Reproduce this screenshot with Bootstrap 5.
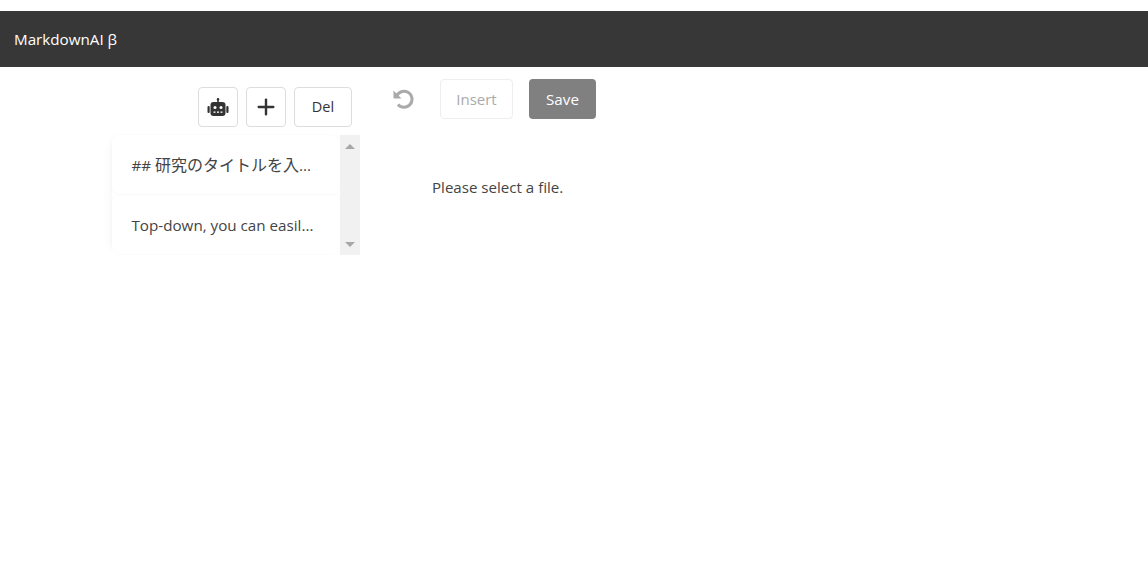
<!DOCTYPE html>
<html lang="en">
<head>
<meta charset="utf-8">
<title>MarkdownAI</title>
<link rel="stylesheet" href="https://cdn.jsdelivr.net/npm/bootstrap@5.3.0/dist/css/bootstrap.min.css">
<style>
html,body{height:100%;overflow:hidden}
body{font-family:"Open Sans","Noto Sans CJK JP",sans-serif;font-size:15px;color:#444;background:#fff;padding-top:11px}
.topbar{height:56px;background:#373737;padding:0 14px}
.topbar .navbar-brand{font-size:15.2px;color:#fff;margin:0;padding:0}
.side-pane{width:360px;padding-top:20px}
.tool-row{padding-right:8px;margin-bottom:8px}
.tool-btn{height:40px;min-width:40px;padding:0;border:1px solid #ddd;border-radius:4px;background:#fff;color:#333;font-size:14.5px;display:flex;align-items:center;justify-content:center}
.del-btn{width:58px}
.file-pane{margin-left:112px;height:120px}
.file-list{width:228px;gap:1px;box-shadow:-8px 0 10px -8px rgba(0,0,0,.06)}
.file-item{height:59px;padding:0 19.5px;border:0;border-radius:8px;background:#fff;box-shadow:0 0 2px rgba(0,0,0,.05);line-height:60px;white-space:nowrap;color:#444;font-size:15.2px}
.cjk-run{font-size:16px}
.scroll-track{width:20px;background:#f1f1f1;padding:9px 0 8px}
.arrow-up,.arrow-down{width:0;height:0;border-left:5px solid transparent;border-right:5px solid transparent}
.arrow-up{border-bottom:5px solid #a8a8a8}
.arrow-down{border-top:5px solid #a8a8a8}
.main-pane{padding:12px 0 0 32px}
.undo-btn{width:22px;height:40px;padding:0;border:0;background:none;display:flex;align-items:center;margin-right:26px}
.insert-btn{width:73px;height:40px;padding:1px 0 0;border:1px solid #eee;border-radius:4px;background:#fff;color:#aaa;font-size:15px;margin-right:16px}
.save-btn{width:67px;height:40px;padding:1px 0 0;border:0;border-radius:4px;background:#808080;color:#fff;font-size:15.2px}
.hint-text{margin:58px 0 0 40px;font-size:15.1px;line-height:20px}
</style>
</head>
<body>
<nav class="navbar topbar align-items-center">
  <span class="navbar-brand">MarkdownAI β</span>
</nav>
<div class="d-flex">
  <div class="side-pane">
    <div class="d-flex justify-content-end gap-2 tool-row">
      <button class="tool-btn" type="button" aria-label="AI">
        <svg width="22" height="20" viewBox="0 -1 22 20" fill="#333"><rect x="10.2" y="0.5" width="1.6" height="4"/><circle cx="11" cy="1.3" r="1.2"/><rect x="3.5" y="4" width="15" height="14" rx="3"/><rect x="0.5" y="8" width="2.2" height="7" rx="1"/><rect x="19.3" y="8" width="2.2" height="7" rx="1"/><circle cx="8" cy="9.5" r="1.5" fill="#fff"/><circle cx="14" cy="9.5" r="1.5" fill="#fff"/><rect x="6.5" y="13.5" width="2" height="1.3" fill="#fff"/><rect x="10" y="13.5" width="2" height="1.3" fill="#fff"/><rect x="13.5" y="13.5" width="2" height="1.3" fill="#fff"/></svg>
      </button>
      <button class="tool-btn" type="button" aria-label="Add">
        <svg width="18" height="18" viewBox="0 0 18 18" fill="#333"><rect x="7.8" y="0.5" width="2.4" height="17" rx="1.1"/><rect x="0.5" y="7.8" width="17" height="2.4" rx="1.1"/></svg>
      </button>
      <button class="tool-btn del-btn" type="button">Del</button>
    </div>
    <div class="d-flex file-pane">
      <div class="d-flex flex-column file-list">
        <div class="file-item">## <span class="cjk-run">研究のタイトルを入</span>...</div>
        <div class="file-item">Top-down, you can easil...</div>
      </div>
      <div class="scroll-track d-flex flex-column justify-content-between align-items-center">
        <div class="arrow-up"></div>
        <div class="arrow-down"></div>
      </div>
    </div>
  </div>
  <div class="main-pane">
    <div class="d-flex align-items-center">
      <button class="undo-btn" type="button" aria-label="Undo">
        <svg width="22" height="22" viewBox="0 0 22 22" fill="none" stroke="#aaa" stroke-width="3"><path d="M4.5 8.5 A8 8 0 1 1 6 16.5"/><path d="M1.5 2.5 V10.5 H9.5" stroke="none" fill="#aaa"/></svg>
      </button>
      <button class="insert-btn" type="button">Insert</button>
      <button class="save-btn" type="button">Save</button>
    </div>
    <p class="hint-text">Please select a file.</p>
  </div>
</div>
<script src="https://cdn.jsdelivr.net/npm/bootstrap@5.3.0/dist/js/bootstrap.bundle.min.js"></script>
</body>
</html>
